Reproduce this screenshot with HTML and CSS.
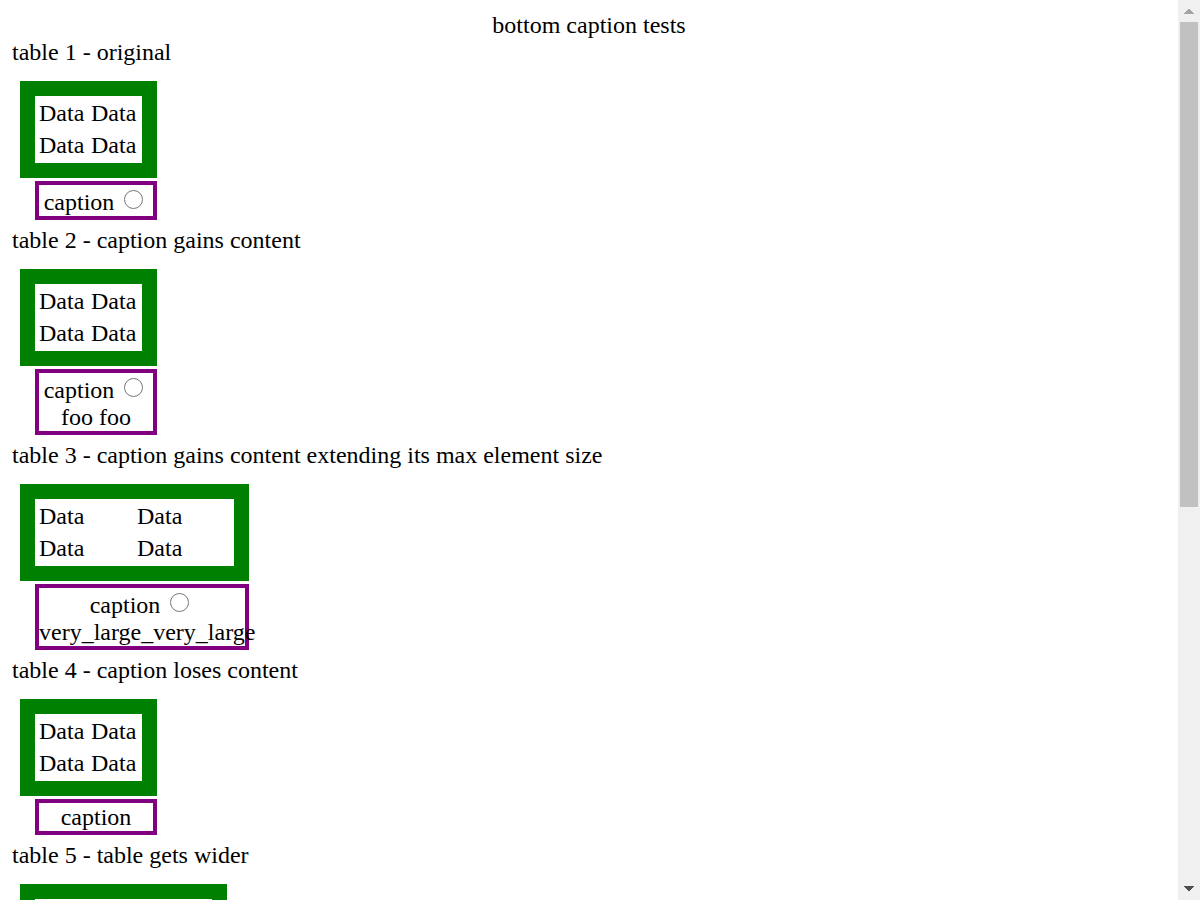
FILE: index.html
```html
<!DOCTYPE html>
<html lang="en">
<head>
<meta charset="utf-8">
<title>bottom caption tests</title>
<link rel="stylesheet" href="styles.css">
</head>
<body>
<main class="page">
  <div class="title">bottom caption tests</div>

  <div class="label">table 1 - original</div>
  <table class="sample">
    <caption>caption <input class="radio" type="radio" name="t1" aria-label="caption"></caption>
    <tr><td>Data</td><td>Data</td></tr>
    <tr><td>Data</td><td>Data</td></tr>
  </table>

  <div class="label">table 2 - caption gains content</div>
  <table class="sample">
    <caption>caption <input class="radio" type="radio" name="t2" aria-label="caption"><br>foo foo</caption>
    <tr><td>Data</td><td>Data</td></tr>
    <tr><td>Data</td><td>Data</td></tr>
  </table>

  <div class="label">table 3 - caption gains content extending its max element size</div>
  <table class="sample wide">
    <caption>caption <input class="radio" type="radio" name="t3" aria-label="caption"><span class="long">very_large_very_large</span></caption>
    <tr><td>Data</td><td>Data</td></tr>
    <tr><td>Data</td><td>Data</td></tr>
  </table>

  <div class="label">table 4 - caption loses content</div>
  <table class="sample">
    <caption>caption</caption>
    <tr><td>Data</td><td>Data</td></tr>
    <tr><td>Data</td><td>Data</td></tr>
  </table>

  <div class="label">table 5 - table gets wider</div>
  <table class="sample wider">
    <tr><td></td><td></td></tr>
    <tr><td></td><td></td></tr>
  </table>
</main>
<div class="scrollbar" aria-hidden="true">
  <svg class="arrow" viewBox="0 0 22 22"><path d="M6 14v-1h1v-1h1v-1h1v-1h1v-1h2v1h1v1h1v1h1v1h1v1z" fill="#a3a3a3"/></svg>
  <div class="track"><div class="thumb"></div></div>
  <svg class="arrow" viewBox="0 0 22 22"><path d="M6 8v1h1v1h1v1h1v1h1v1h2v-1h1v-1h1v-1h1v-1h1v-1z" fill="#505050"/></svg>
</div>
</body>
</html>
```

FILE: styles.css
```css
body {
  display: flex;
  height: 100vh;
  margin: 0;
  overflow: hidden;
  background: #fff;
  color: #000;
  font: 24px/27px "Liberation Serif", "Times New Roman", serif;
}

.page {
  flex: 1;
  min-width: 0;
  box-sizing: border-box;
  padding: 12px;
  overflow: hidden;
}

.title {
  text-align: center;
}

.sample {
  margin: 15px 0 7px 8px;
  border: 15px solid green;
  border-collapse: separate;
  border-spacing: 3px;
}

.sample td {
  box-sizing: border-box;
  min-width: 49px;
  padding: 1px 2px 1px 1px;
}

.wide td {
  min-width: 95px;
}

.wider td {
  min-width: 84px;
  height: 29px;
}

.sample caption {
  caption-side: bottom;
  margin: 3px 0 0 15px;
  padding-top: 1px;
  border: 4px solid purple;
  text-align: center;
}

.radio {
  width: 19px;
  height: 19px;
  margin: 4px 5px 0 4px;
  vertical-align: 1px;
}

.long {
  display: block;
  width: 206px;
}

.scrollbar {
  display: flex;
  flex-direction: column;
  width: 22px;
  background: #f0f0f0;
}

.arrow {
  display: block;
  width: 22px;
  height: 22px;
}

.track {
  flex: 1;
  padding: 0 2px;
}

.thumb {
  height: 56.7%;
  background: #c1c1c1;
}
```
